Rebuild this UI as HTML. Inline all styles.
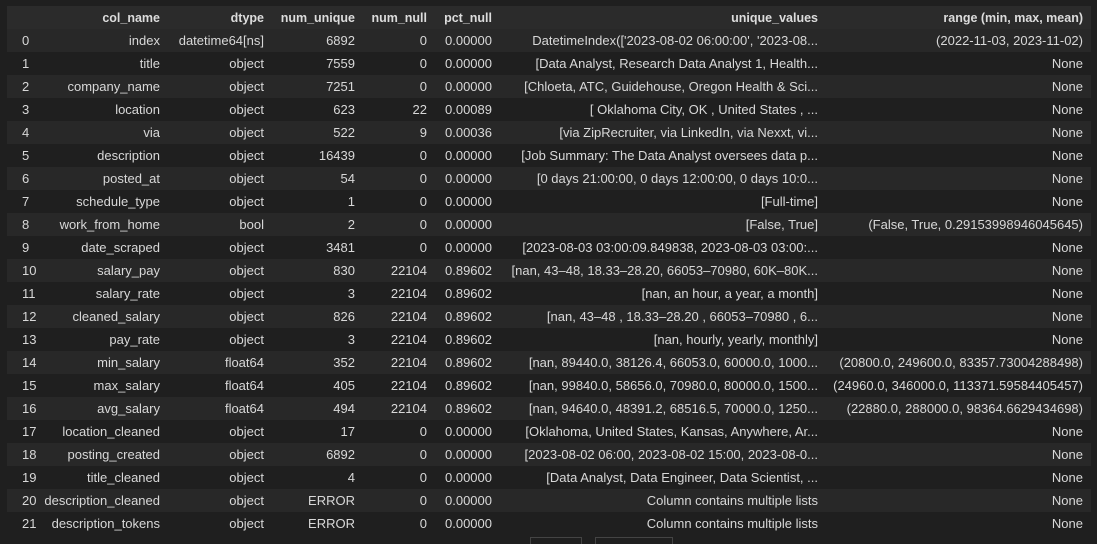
<!DOCTYPE html>
<html><head><meta charset="utf-8"><style>
html,body{margin:0;padding:0;background:#1f1f1f;width:1097px;height:541px;overflow:hidden}
table{position:absolute;left:7px;top:6px;border-collapse:collapse;table-layout:fixed;width:1084px;font-family:"Liberation Sans",sans-serif;font-size:13px;color:#d8d8d8}
td,th{height:23px;padding:0 8px 0 0;text-align:right;white-space:nowrap;overflow:hidden}
th{font-weight:bold;background:#2b2b2b;color:#dcdcdc;font-size:12.5px}
tr:nth-child(even) td{background:#282828}
td:first-child{text-align:left;padding-left:15px}
.b{position:absolute;top:537px;height:6px;border:1px solid #444;border-bottom:none}
</style></head><body>
<table>
<colgroup><col style="width:33px"><col style="width:128px"><col style="width:104px"><col style="width:91px"><col style="width:72px"><col style="width:65px"><col style="width:326px"><col style="width:265px"></colgroup>
<tr><th></th><th>col_name</th><th>dtype</th><th>num_unique</th><th>num_null</th><th>pct_null</th><th>unique_values</th><th>range (min, max, mean)</th></tr>
<tr><td>0</td><td>index</td><td>datetime64[ns]</td><td>6892</td><td>0</td><td>0.00000</td><td>DatetimeIndex(['2023-08-02 06:00:00', '2023-08...</td><td>(2022-11-03, 2023-11-02)</td></tr>
<tr><td>1</td><td>title</td><td>object</td><td>7559</td><td>0</td><td>0.00000</td><td>[Data Analyst, Research Data Analyst 1, Health...</td><td>None</td></tr>
<tr><td>2</td><td>company_name</td><td>object</td><td>7251</td><td>0</td><td>0.00000</td><td>[Chloeta, ATC, Guidehouse, Oregon Health &amp; Sci...</td><td>None</td></tr>
<tr><td>3</td><td>location</td><td>object</td><td>623</td><td>22</td><td>0.00089</td><td>[ Oklahoma City, OK , United States , ...</td><td>None</td></tr>
<tr><td>4</td><td>via</td><td>object</td><td>522</td><td>9</td><td>0.00036</td><td>[via ZipRecruiter, via LinkedIn, via Nexxt, vi...</td><td>None</td></tr>
<tr><td>5</td><td>description</td><td>object</td><td>16439</td><td>0</td><td>0.00000</td><td>[Job Summary: The Data Analyst oversees data p...</td><td>None</td></tr>
<tr><td>6</td><td>posted_at</td><td>object</td><td>54</td><td>0</td><td>0.00000</td><td>[0 days 21:00:00, 0 days 12:00:00, 0 days 10:0...</td><td>None</td></tr>
<tr><td>7</td><td>schedule_type</td><td>object</td><td>1</td><td>0</td><td>0.00000</td><td>[Full-time]</td><td>None</td></tr>
<tr><td>8</td><td>work_from_home</td><td>bool</td><td>2</td><td>0</td><td>0.00000</td><td>[False, True]</td><td>(False, True, 0.29153998946045645)</td></tr>
<tr><td>9</td><td>date_scraped</td><td>object</td><td>3481</td><td>0</td><td>0.00000</td><td>[2023-08-03 03:00:09.849838, 2023-08-03 03:00:...</td><td>None</td></tr>
<tr><td>10</td><td>salary_pay</td><td>object</td><td>830</td><td>22104</td><td>0.89602</td><td>[nan, 43–48, 18.33–28.20, 66053–70980, 60K–80K...</td><td>None</td></tr>
<tr><td>11</td><td>salary_rate</td><td>object</td><td>3</td><td>22104</td><td>0.89602</td><td>[nan, an hour, a year, a month]</td><td>None</td></tr>
<tr><td>12</td><td>cleaned_salary</td><td>object</td><td>826</td><td>22104</td><td>0.89602</td><td>[nan, 43–48 , 18.33–28.20 , 66053–70980 , 6...</td><td>None</td></tr>
<tr><td>13</td><td>pay_rate</td><td>object</td><td>3</td><td>22104</td><td>0.89602</td><td>[nan, hourly, yearly, monthly]</td><td>None</td></tr>
<tr><td>14</td><td>min_salary</td><td>float64</td><td>352</td><td>22104</td><td>0.89602</td><td>[nan, 89440.0, 38126.4, 66053.0, 60000.0, 1000...</td><td>(20800.0, 249600.0, 83357.73004288498)</td></tr>
<tr><td>15</td><td>max_salary</td><td>float64</td><td>405</td><td>22104</td><td>0.89602</td><td>[nan, 99840.0, 58656.0, 70980.0, 80000.0, 1500...</td><td>(24960.0, 346000.0, 113371.59584405457)</td></tr>
<tr><td>16</td><td>avg_salary</td><td>float64</td><td>494</td><td>22104</td><td>0.89602</td><td>[nan, 94640.0, 48391.2, 68516.5, 70000.0, 1250...</td><td>(22880.0, 288000.0, 98364.6629434698)</td></tr>
<tr><td>17</td><td>location_cleaned</td><td>object</td><td>17</td><td>0</td><td>0.00000</td><td>[Oklahoma, United States, Kansas, Anywhere, Ar...</td><td>None</td></tr>
<tr><td>18</td><td>posting_created</td><td>object</td><td>6892</td><td>0</td><td>0.00000</td><td>[2023-08-02 06:00, 2023-08-02 15:00, 2023-08-0...</td><td>None</td></tr>
<tr><td>19</td><td>title_cleaned</td><td>object</td><td>4</td><td>0</td><td>0.00000</td><td>[Data Analyst, Data Engineer, Data Scientist, ...</td><td>None</td></tr>
<tr><td>20</td><td>description_cleaned</td><td>object</td><td>ERROR</td><td>0</td><td>0.00000</td><td>Column contains multiple lists</td><td>None</td></tr>
<tr><td>21</td><td>description_tokens</td><td>object</td><td>ERROR</td><td>0</td><td>0.00000</td><td>Column contains multiple lists</td><td>None</td></tr>
</table>
<div class="b" style="left:530px;width:50px"></div>
<div class="b" style="left:595px;width:76px"></div>
</body></html>
